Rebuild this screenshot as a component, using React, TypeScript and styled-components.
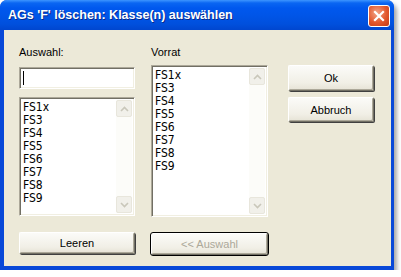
import React from 'react';
import styled, { createGlobalStyle } from 'styled-components';

const GlobalStyles = createGlobalStyle`
  html, body {
    margin: 0;
    padding: 0;
    background: #ffffff;
  }
  * {
    box-sizing: border-box;
  }
`;

const Window = styled.div`
  width: 394px;
  height: 270px;
  border-radius: 7px 7px 0 0;
  background: #0848d8;
  box-shadow: 3px 4px 4px rgba(0, 0, 0, 0.35);
  display: flex;
  flex-direction: column;
  overflow: hidden;
`;

const TitleBar = styled.div`
  height: 30px;
  flex: none;
  display: flex;
  align-items: center;
  justify-content: space-between;
  padding: 0 4px 1px 8px;
  background: linear-gradient(
    #3d95ff 0px,
    #0a66f2 3px,
    #0058ee 8px,
    #0055e8 50%,
    #0050dd 80%,
    #0046cf 100%
  );
`;

const Title = styled.span`
  font-family: 'Liberation Sans', Arial, sans-serif;
  font-weight: bold;
  font-size: 12.5px;
  color: #ffffff;
  text-shadow: 1px 1px #0a2a8a;
  white-space: nowrap;
`;

const CloseButton = styled.div`
  width: 22px;
  height: 22px;
  margin-top: 2px;
  border: 1px solid #ffffff;
  border-radius: 3px;
  background: radial-gradient(circle at 40% 35%, #f2a68a 0%, #e2572d 55%, #c23a14 100%);
  display: flex;
  align-items: center;
  justify-content: center;
`;

const Frame = styled.div`
  flex: 1;
  margin: 0 3px 4px 4px;
  background: #ece9d8;
  display: grid;
  grid-template-columns: 116px 117px 90px;
  column-gap: 16px;
  padding: 16px 0 0 15px;
  font-family: 'Liberation Sans', Arial, sans-serif;
  font-size: 11px;
  color: #000000;
  & > :nth-child(3) {
    margin-left: 4px;
  }
`;

const Column = styled.div`
  display: flex;
  flex-direction: column;
`;

const Label = styled.div`
  height: 13px;
  line-height: 13px;
  margin-bottom: ${(p: { gap: number }) => p.gap}px;
`;

const Sunken = styled.div`
  background: #ffffff;
  border-style: solid;
  border-width: 1px;
  border-color: #aca899 #ffffff #ffffff #aca899;
  box-shadow: inset 1px 1px #716f64, inset -1px -1px #f1efe2;
`;

const TextBox = styled(Sunken)`
  height: 22px;
  padding: 3px 0 0 3px;
  margin-bottom: 8px;
`;

const Caret = styled.div`
  width: 1px;
  height: 14px;
  background: #000000;
`;

const ListBox = styled(Sunken)`
  height: ${(p: { h: number }) => p.h}px;
  display: flex;
  padding: 2px;
`;

const Items = styled.div`
  flex: 1;
  padding: 1px 0 0 1px;
  font-family: 'DejaVu Sans Condensed', 'Liberation Sans', Arial, sans-serif;
  font-size: 12px;
  line-height: 13px;
`;

const ScrollBar = styled.div`
  width: 16px;
  display: flex;
  flex-direction: column;
  background: #fcfcf9;
`;

const ScrollTrack = styled.div`
  flex: 1;
`;

const ScrollArrow = styled.div`
  height: 17px;
  border: 1px solid #e8e6dc;
  border-radius: 2px;
  background: #f1f0ea;
  display: flex;
  align-items: center;
  justify-content: center;
`;

const Button = styled.div`
  height: ${(p: { h?: number }) => p.h ?? 22}px;
  border-radius: 2px;
  border: 1px solid;
  border-color: #ffffff #716f64 #716f64 #ffffff;
  box-shadow: 1px 1px #404040, inset -1px -1px #aca899;
  background: linear-gradient(#fbfbf8, #f1efe6 70%, #e6e3d6);
  display: flex;
  align-items: center;
  justify-content: center;
  font-size: 11px;
  color: #000000;
  margin-bottom: 6px;
`;

const DisabledButton = styled(Button)`
  color: #aca899;
  outline: 1px solid #000000;
  box-shadow: inset -1px -1px #aca899;
`;

const Bottom = styled.div`
  margin-top: 16px;
`;

const Chevron = ({ up }: { up?: boolean }) => (
  <svg width="9" height="6" viewBox="0 0 9 6">
    <path
      d={up ? 'M1 5 L4.5 1.5 L8 5' : 'M1 1 L4.5 4.5 L8 1'}
      fill="none"
      stroke="#c9c7ba"
      strokeWidth="1.6"
    />
  </svg>
);

const items = ['FS1x', 'FS3', 'FS4', 'FS5', 'FS6', 'FS7', 'FS8', 'FS9'];

function List({ h }: { h: number }) {
  return (
    <ListBox h={h}>
      <Items>
        {items.map((it) => (
          <div key={it}>{it}</div>
        ))}
      </Items>
      <ScrollBar>
        <ScrollArrow>
          <Chevron up />
        </ScrollArrow>
        <ScrollTrack />
        <ScrollArrow>
          <Chevron />
        </ScrollArrow>
      </ScrollBar>
    </ListBox>
  );
}

export default function App() {
  return (
    <>
      <GlobalStyles />
      <Window>
        <TitleBar>
          <Title>AGs 'F' löschen: Klasse(n) auswählen</Title>
          <CloseButton>
            <svg width="12" height="12" viewBox="0 0 12 12">
              <path d="M2 2 L10 10 M10 2 L2 10" stroke="#ffffff" strokeWidth="2.2" strokeLinecap="square" />
            </svg>
          </CloseButton>
        </TitleBar>
        <Frame>
          <Column>
            <Label gap={8}>Auswahl:</Label>
            <TextBox>
              <Caret />
            </TextBox>
            <List h={119} />
            <Bottom>
              <Button>Leeren</Button>
            </Bottom>
          </Column>
          <Column>
            <Label gap={6}>Vorrat</Label>
            <List h={152} />
            <Bottom>
              <DisabledButton>&lt;&lt; Auswahl</DisabledButton>
            </Bottom>
          </Column>
          <Column>
            <Label gap={6} />
            <Button h={26}>Ok</Button>
            <Button h={25}>Abbruch</Button>
          </Column>
        </Frame>
      </Window>
    </>
  );
}
